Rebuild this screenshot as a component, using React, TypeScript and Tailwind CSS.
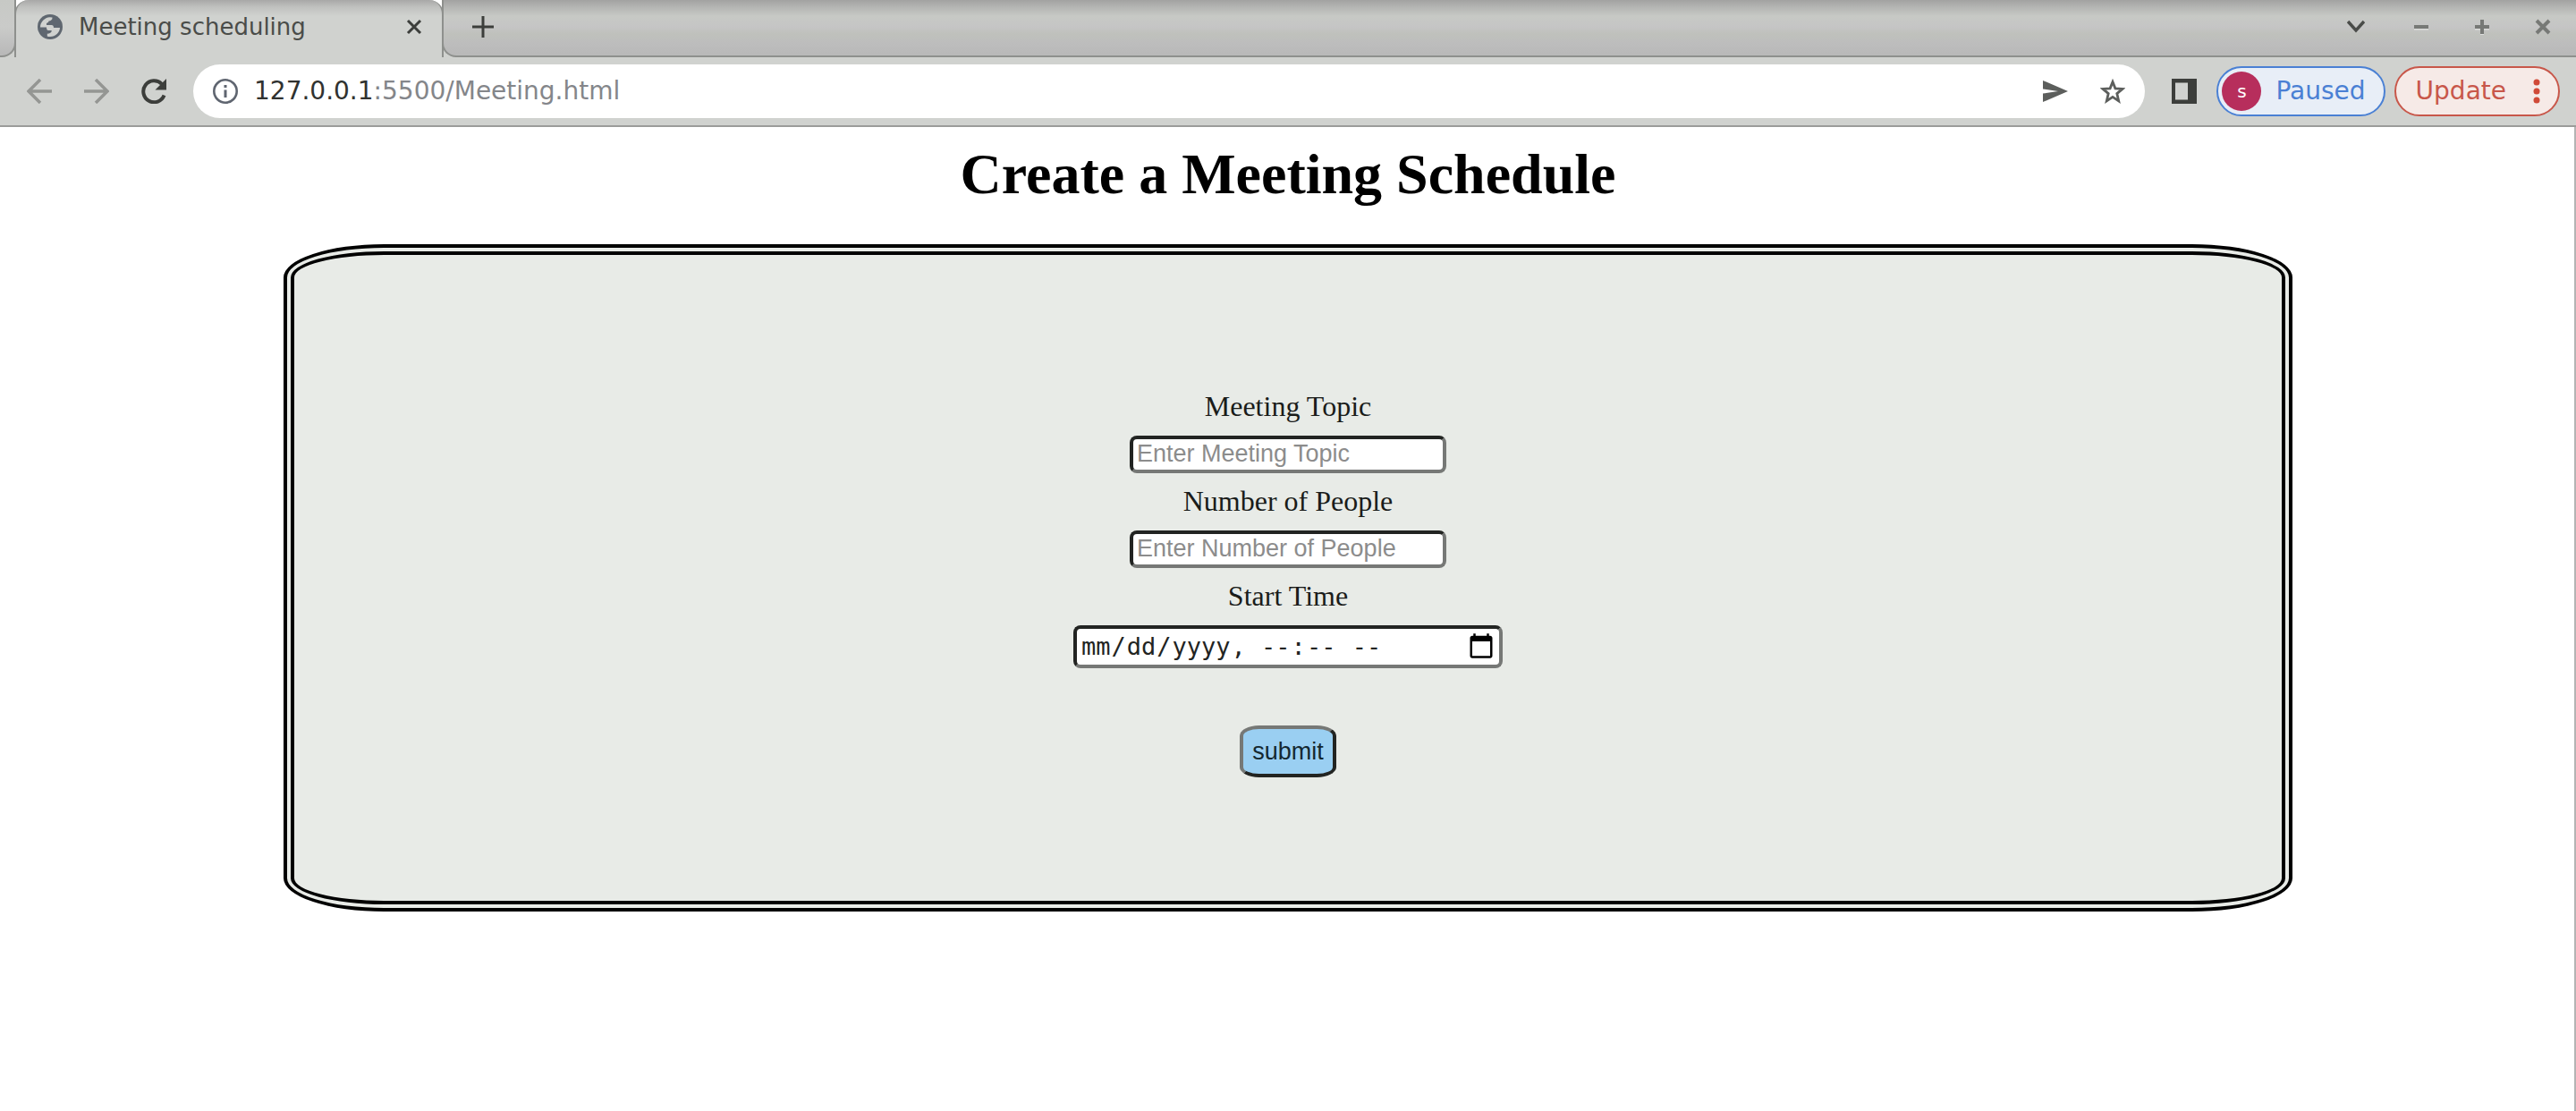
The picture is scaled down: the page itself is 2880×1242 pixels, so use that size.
import type { ReactNode } from 'react';

type IconProps = { className?: string; children: ReactNode; box?: string };

function Icon({ className = '', children, box = '0 0 28 28' }: IconProps) {
  return (
    <svg viewBox={box} className={className} fill="none" stroke="currentColor" aria-hidden="true">
      {children}
    </svg>
  );
}

function TabStrip() {
  return (
    <div className="flex h-16 items-stretch">
      <div className="flex w-4 shrink-0 bg-[#d0d2cf]">
        <div className="-mr-0.5 flex-1 rounded-br-2xl border-r-2 border-b-2 border-[#8e908d] bg-[linear-gradient(to_bottom,#c7c9c5_0px,#cacbc9_30px,#b9b9b9_60px)]" />
      </div>
      <div className="flex w-[480px] shrink-0 items-center rounded-t-2xl border-x-2 border-[#8e908d] bg-[linear-gradient(to_bottom,#a8a8a7_0px,#c0c1bf_8px,#d0d2cf_18px)] pr-[22px] pb-1 pl-6">
        <Icon className="size-7 shrink-0 text-[#5f6770]">
          <circle cx="14" cy="14" r="14" fill="currentColor" stroke="none" />
          <path
            d="M3 14.500C3 8.500 8 3.500 13.500 3.200L16.500 3.500C16.800 6 15 7.200 12.500 7.600C12.300 9 11.500 9.600 10 10V12H15.500C17.300 12 18 13 18 15H25C24.800 20.500 20 24.800 14 25C12.500 25 11.300 24.700 10.800 24.400V21.800C13.500 21.800 15.700 20.500 15.800 18H12C10.800 18 10 17 10 14.500Z"
            fill="#d0d2cf"
            stroke="none"
          />
        </Icon>
        <span className="ml-[18px] flex-1 text-[26px] leading-8 text-[#4a4c49]">Meeting scheduling</span>
        <button type="button" aria-label="Close tab" className="text-[#3c3e3b]">
          <Icon className="size-[18px]" box="0 0 18 18">
            <path d="M2 2l14 14M16 2L2 16" strokeWidth="3" />
          </Icon>
        </button>
      </div>
      <div className="flex flex-1 bg-[linear-gradient(to_bottom,#c7c9c5_32px,#d0d2cf_32px)]">
        <div className="-ml-0.5 flex flex-1 items-center rounded-bl-2xl border-b-2 border-l-2 border-[#8e908d] bg-[linear-gradient(to_bottom,#a2a2a1_0px,#b4b5b3_8px,#c7c9c5_18px,#c5c5c5_30px,#bfc1bc_38px,#bdbdbd_48px,#b9b9b9_60px)] pr-7 pb-0.5 pl-8">
          <button type="button" aria-label="New tab" className="text-[#3c3e3b]">
            <Icon className="size-6" box="0 0 24 24">
              <path d="M12 0v24M0 12h24" strokeWidth="3" />
            </Icon>
          </button>
          <button type="button" aria-label="Search tabs" className="mr-[54px] ml-auto text-[#4a4c49]">
            <Icon className="size-5" box="0 0 20 20">
              <path d="M1 4l9 10 9-10" strokeWidth="3.500" />
            </Icon>
          </button>
          <div className="flex items-center gap-[50px] text-[#777976]">
            <button type="button" aria-label="Minimize">
              <Icon className="size-[18px]" box="0 0 18 18">
                <path d="M1 11.500h16" stroke="#dcdddb" strokeWidth="2" />
                <path d="M1 9h16" strokeWidth="4" />
              </Icon>
            </button>
            <button type="button" aria-label="Maximize">
              <Icon className="size-[18px]" box="0 0 18 18">
                <path d="M1 11.500h16M7 18h4" stroke="#dcdddb" strokeWidth="2" />
                <path d="M9 1v16M1 9h16" strokeWidth="4" />
              </Icon>
            </button>
            <button type="button" aria-label="Close window">
              <Icon className="size-[18px]" box="0 0 18 18">
                <path d="M2 2l14 14M16 2L2 16" strokeWidth="4" />
              </Icon>
            </button>
          </div>
        </div>
      </div>
    </div>
  );
}

function Toolbar() {
  return (
    <div className="flex h-[78px] items-center border-b-2 border-[#9b9c9a] bg-[#d0d2cf] pr-[18px] pl-[30px]">
      <div className="flex items-center gap-9">
        <button type="button" aria-label="Back" className="text-[#949693]">
          <Icon className="size-7">
            <path d="M28 14H2M15 1L2 14l13 13" strokeWidth="3.500" />
          </Icon>
        </button>
        <button type="button" aria-label="Forward" className="text-[#949693]">
          <Icon className="size-7">
            <path d="M0 14h26M13 1l13 13-13 13" strokeWidth="3.500" />
          </Icon>
        </button>
        <button type="button" aria-label="Reload" className="text-[#3c3e3b]">
          <Icon className="size-7">
            <path d="M25.500 18.500A12 12 0 1 1 22.800 5.800" strokeWidth="4" />
            <path d="M28 0v12.500H15.500z" fill="currentColor" stroke="none" />
          </Icon>
        </button>
      </div>
      <div className="ml-[30px] flex h-[60px] flex-1 items-center rounded-full bg-white px-[22px]">
        <Icon className="size-7 text-[#5f6570]">
          <circle cx="14" cy="14" r="12.700" strokeWidth="2.600" />
          <path d="M14 12.500v8.500M14 7v3" strokeWidth="3" />
        </Icon>
        <div role="textbox" aria-label="Address" className="ml-[18px] flex-1 text-[28px] leading-9 text-[#84868a]">
          <span className="text-[#303230]">127.0.0.1</span>:5500/Meeting.html
        </div>
        <button type="button" aria-label="Share" className="text-[#5c5e5c]">
          <Icon className="size-7">
            <path d="M0 2v9.500l17 2.500-17 2.500V26l28-12z" fill="currentColor" stroke="none" />
          </Icon>
        </button>
        <button type="button" aria-label="Bookmark" className="ml-9 text-[#5c5e5c]">
          <Icon className="size-7">
            <path
              d="M14 3.500l2.900 7.300 8.100.6-6.200 5.200 1.900 8.200L14 20.400l-6.700 4.400 1.900-8.200L3 11.400l8.100-.6z"
              strokeWidth="2.800"
            />
          </Icon>
        </button>
      </div>
      <button type="button" aria-label="Side panel" className="ml-[30px] text-[#3c3e3b]">
        <Icon className="size-7">
          <path d="M0 0h28v28H0zM4 4.500v19h14v-19z" fill="currentColor" fillRule="evenodd" stroke="none" />
        </Icon>
      </button>
      <button
        type="button"
        className="ml-[22px] flex h-14 items-center rounded-full border-2 border-[#4a80d4] bg-[#e8eef7] pr-5 pl-1 text-[28px] text-[#4a80d4]"
      >
        <span className="flex size-11 items-center justify-center rounded-full bg-[#b72e5c] text-xl leading-5 text-white">s</span>
        <span className="ml-4">Paused</span>
      </button>
      <button
        type="button"
        className="ml-[10px] flex h-14 items-center rounded-full border-2 border-[#c8574a] bg-[#f6eae7] pr-5 pl-[22px] text-[28px] text-[#c8574a]"
      >
        Update
        <Icon className="ml-[30px] h-7 w-2 text-[#d04a38]" box="0 0 8 28">
          <g fill="currentColor" stroke="none">
            <circle cx="4" cy="4" r="3.500" />
            <circle cx="4" cy="14" r="3.500" />
            <circle cx="4" cy="24" r="3.500" />
          </g>
        </Icon>
      </button>
    </div>
  );
}

const field =
  "rounded-lg border-4 border-t-[#222422] border-l-[#222422] border-r-[#767876] border-b-[#767876] bg-white px-1 text-[#222422]";

function MeetingForm() {
  return (
    <form
      className="mx-auto mt-8 flex w-[78%] flex-col items-center rounded-[5%] border-[12px] border-double border-black bg-[#e8ebe7] pt-[143px] pb-[138px] font-['Liberation_Serif',serif] text-[32px] text-[#1a1c1a]"
      onSubmit={(event) => event.preventDefault()}
    >
      <label htmlFor="topic" className="leading-[53px]">
        Meeting Topic
      </label>
      <div className="flex h-[53px] items-center">
        <input
          id="topic"
          type="text"
          placeholder="Enter Meeting Topic"
          className={`${field} h-[42px] w-[354px] font-['Liberation_Sans',sans-serif] text-[27px] placeholder:text-[#8c8c8c]`}
        />
      </div>
      <label htmlFor="people" className="leading-[53px]">
        Number of People
      </label>
      <div className="flex h-[53px] items-center">
        <input
          id="people"
          type="text"
          placeholder="Enter Number of People"
          className={`${field} h-[42px] w-[354px] font-['Liberation_Sans',sans-serif] text-[27px] placeholder:text-[#8c8c8c]`}
        />
      </div>
      <label htmlFor="start" className="leading-[53px]">
        Start Time
      </label>
      <div className="flex h-[60px] items-center">
        <input
          id="start"
          type="datetime-local"
          className={`${field} h-12 w-[480px] font-['DejaVu_Sans_Mono',monospace] text-[27px] [&::-webkit-calendar-picker-indicator]:size-8 [&::-webkit-calendar-picker-indicator]:p-0`}
        />
      </div>
      <button
        type="submit"
        className="mt-[58px] h-[58px] rounded-[20%] border-4 border-t-[#767876] border-l-[#767876] border-r-[#222422] border-b-[#222422] bg-[#9acff2] px-[10px] font-['Liberation_Sans',sans-serif] text-[27px] text-[#142830]"
      >
        submit
      </button>
    </form>
  );
}

export default function App() {
  return (
    <div className="flex min-h-screen flex-col bg-white font-['DejaVu_Sans',sans-serif]">
      <TabStrip />
      <Toolbar />
      <main className="flex-1 pb-8 shadow-[inset_-2px_0_0_#b4b4b4]">
        <h1 className="pt-[11px] pb-1 text-center font-['Liberation_Serif',serif] text-[64px] leading-[84px] font-bold text-black">
          Create a Meeting Schedule
        </h1>
        <MeetingForm />
      </main>
    </div>
  );
}
